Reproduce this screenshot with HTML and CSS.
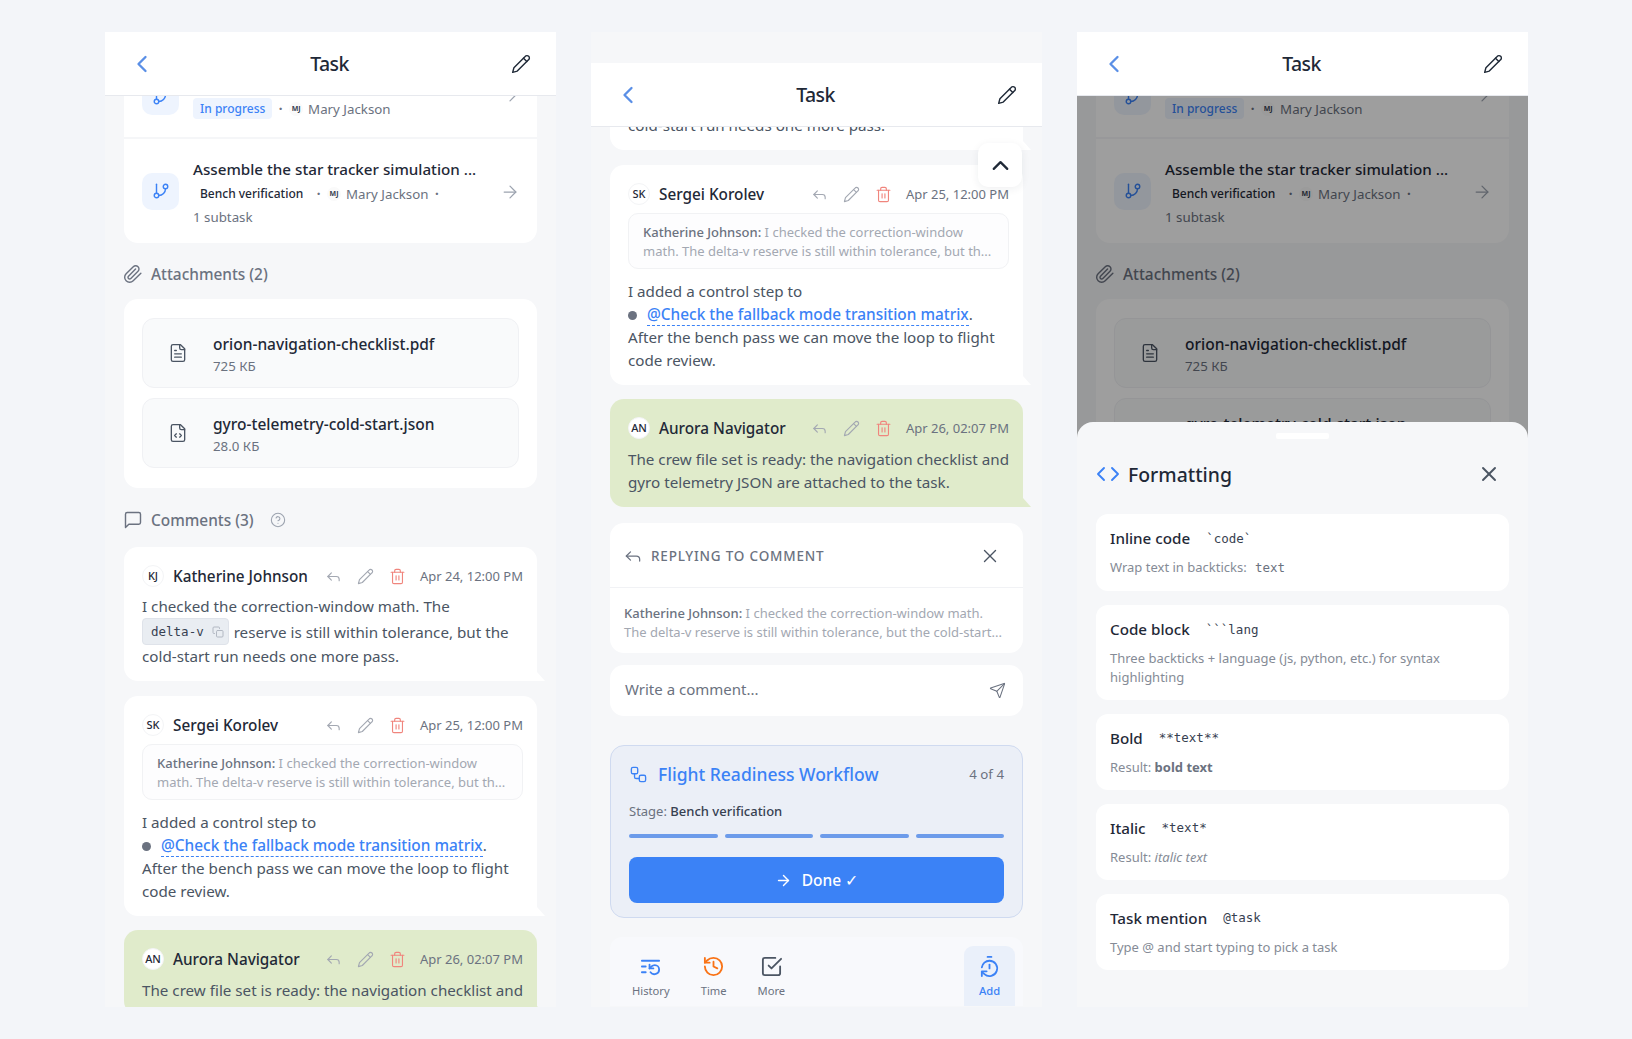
FILE: index.html
```html
<!DOCTYPE html>
<html>

<head>
    <title>Task screens</title>

    <link rel="stylesheet" href="styles.css">
</head>

<body>
    <svg class="sprite" xmlns="http://www.w3.org/2000/svg">
        <symbol id="i-back" viewBox="0 0 24 24"><path d="m15 18-6-6 6-6"/></symbol>
        <symbol id="i-up" viewBox="0 0 24 24"><path d="m18 15-6-6-6 6"/></symbol>
        <symbol id="i-pencil" viewBox="0 0 24 24"><path d="M17 3a2.85 2.83 0 1 1 4 4L7.5 20.5 2 22l1.5-5.5Z"/><path d="m15 5 4 4"/></symbol>
        <symbol id="i-branch" viewBox="0 0 24 24"><path d="M6 3v12"/><circle cx="18" cy="6" r="3"/><circle cx="6" cy="18" r="3"/><path d="M18 9a9 9 0 0 1-9 9"/></symbol>
        <symbol id="i-arrow" viewBox="0 0 24 24"><path d="M5 12h14"/><path d="m12 5 7 7-7 7"/></symbol>
        <symbol id="i-clip" viewBox="0 0 24 24"><path d="m21.44 11.05-9.19 9.19a6 6 0 0 1-8.49-8.49l8.57-8.57A4 4 0 1 1 18 8.84l-8.59 8.57a2 2 0 0 1-2.83-2.83l8.49-8.48"/></symbol>
        <symbol id="i-file" viewBox="0 0 24 24"><path d="M15 2H6a2 2 0 0 0-2 2v16a2 2 0 0 0 2 2h12a2 2 0 0 0 2-2V7Z"/><path d="M14 2v4a2 2 0 0 0 2 2h4"/><path d="M10 9H8"/><path d="M16 13H8"/><path d="M16 17H8"/></symbol>
        <symbol id="i-filecode" viewBox="0 0 24 24"><path d="M15 2H6a2 2 0 0 0-2 2v16a2 2 0 0 0 2 2h12a2 2 0 0 0 2-2V7Z"/><path d="M14 2v4a2 2 0 0 0 2 2h4"/><path d="m10 13-2 2 2 2"/><path d="m14 17 2-2-2-2"/></symbol>
        <symbol id="i-msg" viewBox="0 0 24 24"><path d="M21 15a2 2 0 0 1-2 2H7l-4 4V5a2 2 0 0 1 2-2h14a2 2 0 0 1 2 2z"/></symbol>
        <symbol id="i-help" viewBox="0 0 24 24"><circle cx="12" cy="12" r="10"/><path d="M9.09 9a3 3 0 0 1 5.83 1c0 2-3 3-3 3"/><path d="M12 17h.01"/></symbol>
        <symbol id="i-reply" viewBox="0 0 24 24"><path d="m9 17-5-5 5-5"/><path d="M20 18v-2a4 4 0 0 0-4-4H4"/></symbol>
        <symbol id="i-trash" viewBox="0 0 24 24"><path d="M3 6h18"/><path d="M19 6v14c0 1-1 2-2 2H7c-1 0-2-1-2-2V6"/><path d="M8 6V4c0-1 1-2 2-2h4c1 0 2 1 2 2v2"/><path d="M10 11v6"/><path d="M14 11v6"/></symbol>
        <symbol id="i-copy" viewBox="0 0 24 24"><rect x="9" y="9" width="13" height="13" rx="2"/><path d="M5 15H4a2 2 0 0 1-2-2V4a2 2 0 0 1 2-2h9a2 2 0 0 1 2 2v1"/></symbol>
        <symbol id="i-x" viewBox="0 0 24 24"><path d="M18 6 6 18"/><path d="m6 6 12 12"/></symbol>
        <symbol id="i-send" viewBox="0 0 24 24"><path d="M14.536 21.686a.5.5 0 0 0 .937-.024l6.5-19a.496.496 0 0 0-.635-.635l-19 6.5a.5.5 0 0 0-.024.937l7.93 3.18a2 2 0 0 1 1.112 1.11z"/><path d="m21.854 2.147-10.94 10.939"/></symbol>
        <symbol id="i-flow" viewBox="0 0 24 24"><rect x="3" y="3" width="8" height="8" rx="2"/><path d="M7 11v4a2 2 0 0 0 2 2h4"/><rect x="13" y="13" width="8" height="8" rx="2"/></symbol>
        <symbol id="i-list" viewBox="0 0 24 24"><path d="M21 6H3"/><path d="M7 12H3"/><path d="M7 18H3"/><path d="M12 18a5 5 0 0 0 9-3 4.5 4.5 0 0 0-4.5-4.5c-1.33 0-2.54.54-3.41 1.41L11 14"/><path d="M11 10v4h4"/></symbol>
        <symbol id="i-history" viewBox="0 0 24 24"><path d="M3 12a9 9 0 1 0 9-9 9.75 9.75 0 0 0-6.74 2.74L3 8"/><path d="M3 3v5h5"/><path d="M12 7v5l4 2"/></symbol>
        <symbol id="i-check" viewBox="0 0 24 24"><path d="m9 11 3 3L22 4"/><path d="M21 12v7a2 2 0 0 1-2 2H5a2 2 0 0 1-2-2V5a2 2 0 0 1 2-2h11"/></symbol>
        <symbol id="i-timer" viewBox="0 0 24 24"><path d="M10 2h4"/><path d="M12 14v-4"/><path d="M4 13a8 8 0 0 1 8-7 8 8 0 1 1-5.3 14L4 17.6"/><path d="M9 17H4v5"/></symbol>
        <symbol id="i-code" viewBox="0 0 24 24"><path d="m16 18 6-6-6-6"/><path d="m8 6-6 6 6 6"/></symbol>
    </svg>

    <div class="screens">

        <!-- left: task details scrolled to the comments -->
        <section class="panel">
            <header class="task-header">
                <svg class="ic back-ic"><use href="#i-back"/></svg>
                <h1>Task</h1>
                <svg class="ic edit-ic"><use href="#i-pencil"/></svg>
            </header>
            <div class="panel-scroll">
                <div class="scroll-inner scrolled-subtasks">
                    <div class="card subtasks">
                        <div class="subtask">
                            <div class="subtask-icon"><svg class="ic"><use href="#i-branch"/></svg></div>
                            <div class="subtask-body">
                                <div class="subtask-title">Calibrate the gyro drift model ...</div>
                                <div class="subtask-meta">
                                    <span class="pill pill-blue">In progress</span><span class="dot">·</span><span class="mini-av">MJ</span><span>Mary Jackson</span>
                                </div>
                            </div>
                            <svg class="ic subtask-arrow"><use href="#i-arrow"/></svg>
                        </div>
                        <div class="subtask">
                            <div class="subtask-icon"><svg class="ic"><use href="#i-branch"/></svg></div>
                            <div class="subtask-body">
                                <div class="subtask-title">Assemble the star tracker simulation ...</div>
                                <div class="subtask-meta">
                                    <span class="pill pill-plain">Bench verification</span><span class="dot">·</span><span class="mini-av">MJ</span><span>Mary Jackson</span><span class="dot">·</span>
                                </div>
                                <div class="subtask-meta">1 subtask</div>
                            </div>
                            <svg class="ic subtask-arrow"><use href="#i-arrow"/></svg>
                        </div>
                    </div>

                    <div class="section-title"><svg class="ic"><use href="#i-clip"/></svg>Attachments (2)</div>
                    <div class="card files">
                        <div class="file">
                            <svg class="ic"><use href="#i-file"/></svg>
                            <div class="file-info">
                                <div class="file-name">orion-navigation-checklist.pdf</div>
                                <div class="file-size">725 КБ</div>
                            </div>
                        </div>
                        <div class="file">
                            <svg class="ic"><use href="#i-filecode"/></svg>
                            <div class="file-info">
                                <div class="file-name">gyro-telemetry-cold-start.json</div>
                                <div class="file-size">28.0 КБ</div>
                            </div>
                        </div>
                    </div>

                    <div class="section-title comments-title"><svg class="ic"><use href="#i-msg"/></svg>Comments (3)<svg class="ic help-ic"><use href="#i-help"/></svg></div>

                    <div class="comments">
                        <article class="comment">
                            <div class="comment-head">
                                <span class="avatar">KJ</span><span class="author">Katherine Johnson</span>
                                <span class="comment-tools">
                                    <svg class="ic"><use href="#i-reply"/></svg>
                                    <svg class="ic"><use href="#i-pencil"/></svg>
                                    <svg class="ic trash-ic"><use href="#i-trash"/></svg>
                                </span>
                                <span class="comment-date">Apr 24, 12:00 PM</span>
                            </div>
                            <div class="comment-text">I checked the correction-window math. The <span class="code-chip">delta-v<svg class="ic"><use href="#i-copy"/></svg></span> reserve is still within tolerance, but the cold-start run needs one more pass.</div>
                        </article>

                        <article class="comment">
                            <div class="comment-head">
                                <span class="avatar">SK</span><span class="author">Sergei Korolev</span>
                                <span class="comment-tools">
                                    <svg class="ic"><use href="#i-reply"/></svg>
                                    <svg class="ic"><use href="#i-pencil"/></svg>
                                    <svg class="ic trash-ic"><use href="#i-trash"/></svg>
                                </span>
                                <span class="comment-date">Apr 25, 12:00 PM</span>
                            </div>
                            <div class="quote"><b>Katherine Johnson:</b> I checked the correction-window<br>math. The delta-v reserve is still within tolerance, but th...</div>
                            <div class="comment-text">I added a control step to<br><span class="task-dot"></span><a class="task-link">@Check the fallback mode transition matrix</a>.<br>After the bench pass we can move the loop to flight code review.</div>
                        </article>

                        <article class="comment comment-own">
                            <div class="comment-head">
                                <span class="avatar">AN</span><span class="author">Aurora Navigator</span>
                                <span class="comment-tools">
                                    <svg class="ic"><use href="#i-reply"/></svg>
                                    <svg class="ic"><use href="#i-pencil"/></svg>
                                    <svg class="ic trash-ic"><use href="#i-trash"/></svg>
                                </span>
                                <span class="comment-date">Apr 26, 02:07 PM</span>
                            </div>
                            <div class="comment-text">The crew file set is ready: the navigation checklist and</div>
                        </article>
                    </div>
                </div>
            </div>
        </section>

        <!-- middle: replying to a comment, workflow and toolbar -->
        <section class="panel panel-reply">
            <header class="task-header">
                <svg class="ic back-ic"><use href="#i-back"/></svg>
                <h1>Task</h1>
                <svg class="ic edit-ic"><use href="#i-pencil"/></svg>
            </header>
            <div class="panel-scroll">
                <button class="to-top"><svg class="ic"><use href="#i-up"/></svg></button>
                <div class="scroll-inner scrolled-comments">
                    <div class="comments">
                        <article class="comment">
                            <div class="comment-head">
                                <span class="avatar">KJ</span><span class="author">Katherine Johnson</span>
                            </div>
                            <div class="comment-text">I checked the correction-window math. The <span class="code-chip">delta-v<svg class="ic"><use href="#i-copy"/></svg></span> reserve is still within tolerance, but the cold-start run needs one more pass.</div>
                        </article>

                        <article class="comment">
                            <div class="comment-head">
                                <span class="avatar">SK</span><span class="author">Sergei Korolev</span>
                                <span class="comment-tools">
                                    <svg class="ic"><use href="#i-reply"/></svg>
                                    <svg class="ic"><use href="#i-pencil"/></svg>
                                    <svg class="ic trash-ic"><use href="#i-trash"/></svg>
                                </span>
                                <span class="comment-date">Apr 25, 12:00 PM</span>
                            </div>
                            <div class="quote"><b>Katherine Johnson:</b> I checked the correction-window<br>math. The delta-v reserve is still within tolerance, but th...</div>
                            <div class="comment-text">I added a control step to<br><span class="task-dot"></span><a class="task-link">@Check the fallback mode transition matrix</a>.<br>After the bench pass we can move the loop to flight code review.</div>
                        </article>

                        <article class="comment comment-own">
                            <div class="comment-head">
                                <span class="avatar">AN</span><span class="author">Aurora Navigator</span>
                                <span class="comment-tools">
                                    <svg class="ic"><use href="#i-reply"/></svg>
                                    <svg class="ic"><use href="#i-pencil"/></svg>
                                    <svg class="ic trash-ic"><use href="#i-trash"/></svg>
                                </span>
                                <span class="comment-date">Apr 26, 02:07 PM</span>
                            </div>
                            <div class="comment-text">The crew file set is ready: the navigation checklist and gyro telemetry JSON are attached to the task.</div>
                        </article>
                    </div>

                    <div class="card reply-box">
                        <div class="reply-head">
                            <svg class="ic"><use href="#i-reply"/></svg>
                            <span>REPLYING TO COMMENT</span>
                            <svg class="ic reply-close"><use href="#i-x"/></svg>
                        </div>
                        <div class="reply-quote"><b>Katherine Johnson:</b> I checked the correction-window math.<br>The delta-v reserve is still within tolerance, but the cold-start...</div>
                    </div>

                    <div class="card comment-input">
                        <span>Write a comment...</span>
                        <svg class="ic"><use href="#i-send"/></svg>
                    </div>

                    <div class="workflow">
                        <div class="workflow-head">
                            <svg class="ic"><use href="#i-flow"/></svg>
                            <span class="workflow-name">Flight Readiness Workflow</span>
                            <span class="workflow-count">4 of 4</span>
                        </div>
                        <div class="workflow-stage">Stage: <b>Bench verification</b></div>
                        <div class="workflow-bars"><span></span><span></span><span></span><span></span></div>
                        <button class="workflow-btn"><svg class="ic"><use href="#i-arrow"/></svg>Done ✓</button>
                    </div>

                    <nav class="toolbar">
                        <div class="tool tool-blue"><svg class="ic"><use href="#i-list"/></svg><span>History</span></div>
                        <div class="tool tool-orange"><svg class="ic"><use href="#i-history"/></svg><span>Time</span></div>
                        <div class="tool tool-gray"><svg class="ic"><use href="#i-check"/></svg><span>More</span></div>
                        <div class="tool tool-add"><svg class="ic"><use href="#i-timer"/></svg><span>Add</span></div>
                    </nav>
                </div>
            </div>
        </section>

        <!-- right: formatting help sheet over the task -->
        <section class="panel">
            <header class="task-header">
                <svg class="ic back-ic"><use href="#i-back"/></svg>
                <h1>Task</h1>
                <svg class="ic edit-ic"><use href="#i-pencil"/></svg>
            </header>
            <div class="panel-scroll">
                <div class="scroll-inner scrolled-subtasks">
                    <div class="card subtasks">
                        <div class="subtask">
                            <div class="subtask-icon"><svg class="ic"><use href="#i-branch"/></svg></div>
                            <div class="subtask-body">
                                <div class="subtask-title">Calibrate the gyro drift model ...</div>
                                <div class="subtask-meta">
                                    <span class="pill pill-blue">In progress</span><span class="dot">·</span><span class="mini-av">MJ</span><span>Mary Jackson</span>
                                </div>
                            </div>
                            <svg class="ic subtask-arrow"><use href="#i-arrow"/></svg>
                        </div>
                        <div class="subtask">
                            <div class="subtask-icon"><svg class="ic"><use href="#i-branch"/></svg></div>
                            <div class="subtask-body">
                                <div class="subtask-title">Assemble the star tracker simulation ...</div>
                                <div class="subtask-meta">
                                    <span class="pill pill-plain">Bench verification</span><span class="dot">·</span><span class="mini-av">MJ</span><span>Mary Jackson</span><span class="dot">·</span>
                                </div>
                                <div class="subtask-meta">1 subtask</div>
                            </div>
                            <svg class="ic subtask-arrow"><use href="#i-arrow"/></svg>
                        </div>
                    </div>

                    <div class="section-title"><svg class="ic"><use href="#i-clip"/></svg>Attachments (2)</div>
                    <div class="card files">
                        <div class="file">
                            <svg class="ic"><use href="#i-file"/></svg>
                            <div class="file-info">
                                <div class="file-name">orion-navigation-checklist.pdf</div>
                                <div class="file-size">725 КБ</div>
                            </div>
                        </div>
                        <div class="file">
                            <svg class="ic"><use href="#i-filecode"/></svg>
                            <div class="file-info">
                                <div class="file-name">gyro-telemetry-cold-start.json</div>
                                <div class="file-size">28.0 КБ</div>
                            </div>
                        </div>
                    </div>
                </div>
                <div class="overlay"></div>
            </div>

            <div class="sheet">
                <div class="sheet-handle"></div>
                <div class="sheet-head">
                    <svg class="ic"><use href="#i-code"/></svg>
                    <h2>Formatting</h2>
                    <svg class="ic sheet-close"><use href="#i-x"/></svg>
                </div>
                <div class="hint">
                    <div class="hint-title">Inline code <code>`code`</code></div>
                    <div class="hint-text">Wrap text in backticks: <code>text</code></div>
                </div>
                <div class="hint">
                    <div class="hint-title">Code block <code>```lang</code></div>
                    <div class="hint-text">Three backticks + language (js, python, etc.) for syntax highlighting</div>
                </div>
                <div class="hint">
                    <div class="hint-title">Bold <code>**text**</code></div>
                    <div class="hint-text">Result: <b>bold text</b></div>
                </div>
                <div class="hint">
                    <div class="hint-title">Italic <code>*text*</code></div>
                    <div class="hint-text">Result: <i>italic text</i></div>
                </div>
                <div class="hint">
                    <div class="hint-title">Task mention <code>@task</code></div>
                    <div class="hint-text">Type @ and start typing to pick a task</div>
                </div>
            </div>
        </section>

    </div>
</body>

</html>
```

FILE: styles.css
```css
* {
    box-sizing: border-box;
}

body {
    margin: 0;
    height: 1039px;
    overflow: hidden;
    background-color: #f3f5f9;
    font-family: "Noto Sans", "Open Sans", sans-serif;
    color: #1f2937;
}

.sprite {
    display: none;
}

.ic {
    width: 24px;
    height: 24px;
    flex: none;
    fill: none;
    stroke: currentColor;
    stroke-width: 2;
    stroke-linecap: round;
    stroke-linejoin: round;
}

.screens {
    display: flex;
    gap: 35px;
    padding: 32px 104px 0 105px;
}

.panel {
    position: relative;
    width: 451px;
    height: 975px;
    display: flex;
    flex-direction: column;
    overflow: hidden;
    background-color: #f6f7f9;
}

.panel-reply {
    padding-top: 31px;
}

.task-header {
    height: 64px;
    flex: none;
    display: grid;
    grid-template-columns: 1fr auto 1fr;
    align-items: center;
    padding: 0 25px 0 23px;
    background-color: #fff;
    border-bottom: 1px solid #e7e9ee;
    position: relative;
    z-index: 2;
}

.task-header h1 {
    margin: 0;
    font-size: 19.5px;
    font-weight: 500;
    letter-spacing: -0.6px;
    color: #1f2937;
}

.back-ic {
    width: 28px;
    height: 28px;
    color: #5a8fe6;
}

.edit-ic {
    width: 20px;
    height: 20px;
    justify-self: end;
    color: #1f2937;
    stroke-width: 1.7;
}

.panel-scroll {
    position: relative;
    flex: 1;
    overflow: hidden;
}

.scroll-inner {
    padding: 0 19px;
}

.scrolled-subtasks {
    margin-top: -43px;
}

.scrolled-comments {
    margin-top: -111px;
}

.card {
    background-color: #fff;
    border-radius: 14px;
}

/* subtasks */
.subtask {
    display: flex;
    align-items: center;
    padding: 20px 17px 17px 18px;
    border-bottom: 2px solid #f5f6f8;
}

.subtask:last-child {
    padding: 19px 17px 15px 18px;
    border-bottom: 0;
}

.subtask:last-child .subtask-icon {
    margin-bottom: 4px;
}

.subtask-icon {
    width: 37px;
    height: 37px;
    flex: none;
    display: flex;
    align-items: center;
    justify-content: center;
    margin-right: 14px;
    border-radius: 10px;
    background-color: #eef4fe;
    color: #3b82f6;
}

.subtask-icon .ic {
    width: 18px;
    height: 18px;
    stroke-width: 1.9;
}

.subtask-body {
    flex: 1;
    min-width: 0;
}

.subtask-title {
    height: 24px;
    font-size: 15.2px;
    line-height: 23px;
    font-weight: 500;
    white-space: nowrap;
}

.subtask-meta {
    display: flex;
    align-items: center;
    min-height: 23px;
    font-size: 13.3px;
    color: #6b7280;
    white-space: nowrap;
}

.pill {
    padding: 0 7px;
    height: 21px;
    line-height: 21px;
    border-radius: 4px;
    font-size: 12px;
    font-weight: 500;
}

.pill-blue {
    background-color: #eef4fe;
    color: #3b82f6;
}

.pill-plain {
    color: #1f2937;
}

.dot {
    margin: 0 6.5px;
    font-weight: 700;
    color: #6b7280;
}

.mini-av {
    width: 14px;
    height: 14px;
    margin-right: 5px;
    border-radius: 50%;
    background-color: #fafafa;
    font-size: 7px;
    font-weight: 700;
    line-height: 14px;
    text-align: center;
    color: #374151;
}

.subtask-arrow {
    width: 20px;
    height: 20px;
    margin-bottom: 3px;
    color: #9ca3af;
    stroke-width: 1.5;
}

/* section titles */
.section-title {
    height: 24px;
    display: flex;
    align-items: center;
    margin: 19px 0 13px 0;
    font-size: 15.4px;
    font-weight: 500;
    color: #6b7280;
}

.section-title .ic {
    width: 20px;
    height: 20px;
    margin: 0 8px 0 -1px;
    stroke-width: 1.7;
}

.section-title .help-ic {
    width: 16px;
    height: 16px;
    margin: 0 0 0 16px;
    color: #9ca3af;
    stroke-width: 1.6;
}

.comments-title {
    margin: 20px 0 15px 0;
}

/* attachments */
.files {
    display: flex;
    flex-direction: column;
    gap: 10px;
    padding: 19px 18px 20px 18px;
}

.file {
    display: flex;
    align-items: center;
    height: 70px;
    padding-left: 25px;
    border: 1px solid #f0f1f4;
    border-radius: 12px;
    background-color: #f9fafb;
}

.file .ic {
    width: 20px;
    height: 20px;
    margin-right: 25px;
    color: #4b5563;
    stroke-width: 1.6;
}

.file-info {
    padding-top: 4px;
}

.file-name {
    font-size: 15.5px;
    line-height: 22px;
    font-weight: 500;
}

.file-size {
    font-size: 13.3px;
    line-height: 22px;
    color: #6b7280;
}

/* comments */
.comments {
    display: flex;
    flex-direction: column;
    gap: 15px;
}

.comment {
    position: relative;
    padding: 18px 14px 13px 18px;
    background-color: #fff;
    border-radius: 14px 14px 0 14px;
}

.comment::after {
    content: "";
    position: absolute;
    right: -8px;
    bottom: 0;
    width: 8px;
    height: 9px;
    background-color: inherit;
    clip-path: polygon(0 0, 100% 100%, 0 100%);
}

.comment-own {
    margin-top: -1px;
    background-color: #e0ebcb;
}

.comment-own .comment-text {
    padding-top: 1px;
}

.comment-head {
    display: flex;
    align-items: center;
    height: 22px;
    margin-bottom: 8px;
}

.avatar {
    width: 22px;
    height: 22px;
    flex: none;
    margin-right: 9px;
    border-radius: 50%;
    background-color: #fff;
    border: 1px solid #f3f4f6;
    font-size: 11px;
    font-weight: 500;
    line-height: 20px;
    text-align: center;
    color: #1f2937;
}

.author {
    font-size: 15.3px;
    font-weight: 500;
    white-space: nowrap;
}

.comment-tools {
    position: absolute;
    right: 131px;
    display: flex;
    gap: 15px;
}

.comment-tools .ic {
    width: 17px;
    height: 17px;
    color: #a3a8b2;
    stroke-width: 1.6;
}

.comment-tools .trash-ic {
    color: #f0857d;
}

.comment-date {
    margin-left: auto;
    font-size: 13px;
    color: #6b7280;
    white-space: nowrap;
}

.comment-text {
    margin-right: -4px;
    font-size: 15.2px;
    line-height: 23px;
    color: #4b5563;
}

.code-chip {
    display: inline-flex;
    align-items: center;
    height: 27px;
    padding: 0 4px 0 8px;
    margin-right: 1px;
    border-radius: 4px;
    border: 1px solid #dfe3ea;
    background-color: #e9edf2;
    font-family: "DejaVu Sans Mono", monospace;
    font-size: 12.5px;
    vertical-align: 2px;
    color: #374151;
}

.code-chip .ic {
    width: 12px;
    height: 12px;
    margin-left: 8px;
    color: #b2b8c2;
    stroke-width: 2;
}

.quote {
    margin: 2px 0 11px 0;
    padding: 9px 14px 8px 14px;
    border: 1px solid #f1f2f4;
    border-radius: 10px;
    background-color: #fdfdfe;
    font-size: 13px;
    line-height: 18.5px;
    color: #a3a8b2;
    white-space: nowrap;
    overflow: hidden;
}

.quote b,
.reply-quote b {
    font-weight: 500;
    color: #6b7280;
}

.task-dot {
    display: inline-block;
    width: 9px;
    height: 9px;
    margin-right: 10px;
    border-radius: 50%;
    background-color: #6b7280;
}

.task-link {
    font-size: 15.4px;
    color: #3b82f6;
    font-weight: 500;
    border-bottom: 1px dashed #3b82f6;
}

/* middle panel */
.to-top {
    position: absolute;
    top: 16px;
    right: 20px;
    z-index: 1;
    width: 44px;
    height: 44px;
    display: flex;
    align-items: center;
    justify-content: center;
    padding: 0;
    border: 0;
    border-radius: 10px;
    background-color: #fff;
    box-shadow: 0 2px 8px rgba(31, 41, 55, 0.07);
    color: #1f2937;
}

.to-top .ic {
    width: 27px;
    height: 27px;
    stroke-width: 2;
}

.reply-box {
    margin-top: 16px;
}

.reply-head {
    display: flex;
    align-items: center;
    height: 65px;
    padding: 2px 22px 0 13px;
    border-bottom: 1px solid #f1f2f5;
    font-size: 13.5px;
    font-weight: 500;
    letter-spacing: 0.8px;
    color: #6b7280;
}

.reply-head .ic {
    width: 20px;
    height: 20px;
    margin-right: 8px;
    stroke-width: 1.5;
}

.reply-head .reply-close {
    width: 22px;
    height: 22px;
    margin: 0 0 0 auto;
    color: #4b5563;
}

.reply-quote {
    padding: 16px 14px 12px 14px;
    font-size: 13px;
    line-height: 18.5px;
    color: #a3a8b2;
    white-space: nowrap;
}

.comment-input {
    display: flex;
    align-items: center;
    justify-content: space-between;
    height: 51px;
    margin-top: 12px;
    padding: 0 17px 0 15px;
    font-size: 15px;
    color: #6b7280;
}

.comment-input span {
    padding-bottom: 4px;
}

.comment-input .ic {
    width: 17px;
    height: 17px;
    stroke-width: 1.5;
}

.workflow {
    margin-top: 29px;
    height: 173px;
    padding: 16px 18px;
    border: 1px solid #cfdaf0;
    border-radius: 14px;
    background-color: #ebeff7;
}

.workflow-head {
    display: flex;
    align-items: center;
    height: 24px;
}

.workflow-head .ic {
    width: 19px;
    height: 19px;
    margin-right: 10px;
    color: #3b82f6;
    stroke-width: 1.7;
}

.workflow-name {
    font-size: 17.5px;
    font-weight: 500;
    color: #3b82f6;
}

.workflow-count {
    margin-left: auto;
    font-size: 13.3px;
    color: #6b7280;
}

.workflow-stage {
    margin-top: 16px;
    font-size: 13px;
    line-height: 18px;
    color: #6b7280;
}

.workflow-stage b {
    font-weight: 500;
    color: #374151;
}

.workflow-bars {
    display: flex;
    gap: 7px;
    margin-top: 14px;
}

.workflow-bars span {
    flex: 1;
    height: 4px;
    border-radius: 2px;
    background-color: #6c9bea;
}

.workflow-btn {
    width: 100%;
    height: 46px;
    display: flex;
    align-items: center;
    justify-content: center;
    gap: 10px;
    margin-top: 19px;
    border: 0;
    border-radius: 8px;
    background-color: #3b82f6;
    font-family: inherit;
    font-size: 15.5px;
    font-weight: 500;
    color: #fff;
}

.workflow-btn .ic {
    width: 17px;
    height: 17px;
}

.toolbar {
    display: flex;
    gap: 31px;
    height: 69px;
    margin-top: 19px;
    padding: 9px 8px 0 22px;
    background-color: #f8f9fc;
    border-radius: 12px 12px 0 0;
}

.tool {
    display: flex;
    flex-direction: column;
    align-items: center;
    font-size: 11.2px;
    color: #6b7280;
}

.tool .ic {
    width: 23px;
    height: 23px;
    margin: 9px 0 5px 0;
    stroke-width: 1.9;
}

.tool-blue .ic {
    color: #3b82f6;
}

.tool-orange .ic {
    color: #f97316;
}

.tool-gray .ic {
    color: #4b5563;
}

.tool-add {
    width: 51px;
    height: 60px;
    margin-left: auto;
    border-radius: 9px 9px 0 0;
    background-color: #eaf0fa;
    font-weight: 500;
    color: #3b82f6;
}

.tool-add .ic {
    color: #3b82f6;
}

/* formatting sheet */
.overlay {
    position: absolute;
    top: 0;
    right: 0;
    bottom: 0;
    left: 0;
    background-color: rgba(0, 0, 0, 0.38);
}

.sheet {
    position: absolute;
    top: 390px;
    right: 0;
    bottom: 0;
    left: 0;
    z-index: 3;
    padding: 0 19px;
    border-radius: 16px 16px 0 0;
    background-color: #f6f7f9;
}

.sheet-handle {
    width: 53px;
    height: 6px;
    margin: 11px auto 0 auto;
    border-radius: 2px;
    background-color: #fff;
}

.sheet-head {
    display: flex;
    align-items: center;
    height: 30px;
    margin: 20px 0 25px 0;
}

.sheet-head .ic {
    width: 24px;
    height: 24px;
    margin-right: 8px;
    color: #3b82f6;
    stroke-width: 1.9;
}

.sheet-head h2 {
    margin: 0;
    font-size: 19.4px;
    font-weight: 500;
    color: #1f2937;
}

.sheet-head .sheet-close {
    margin: 0 8px 0 auto;
    color: #4b5563;
}

.hint {
    margin-bottom: 14px;
    padding: 14px 14px 13.5px 14px;
    background-color: #fff;
    border-radius: 12px;
}

.hint-title {
    display: flex;
    gap: 16px;
    align-items: center;
    height: 20px;
    margin-bottom: 10px;
    font-size: 15.2px;
    font-weight: 500;
}

.hint-title code,
.hint-text code {
    font-family: "DejaVu Sans Mono", monospace;
    font-size: 12.5px;
    font-weight: 400;
    color: #374151;
}

.hint-text {
    font-size: 13px;
    line-height: 18.5px;
    color: #858b96;
}

.hint-text code {
    display: inline-block;
    line-height: 19.5px;
    margin-left: 5px;
    color: #6b7280;
}

.hint-text b {
    font-weight: 700;
    color: #6b7280;
}
```
